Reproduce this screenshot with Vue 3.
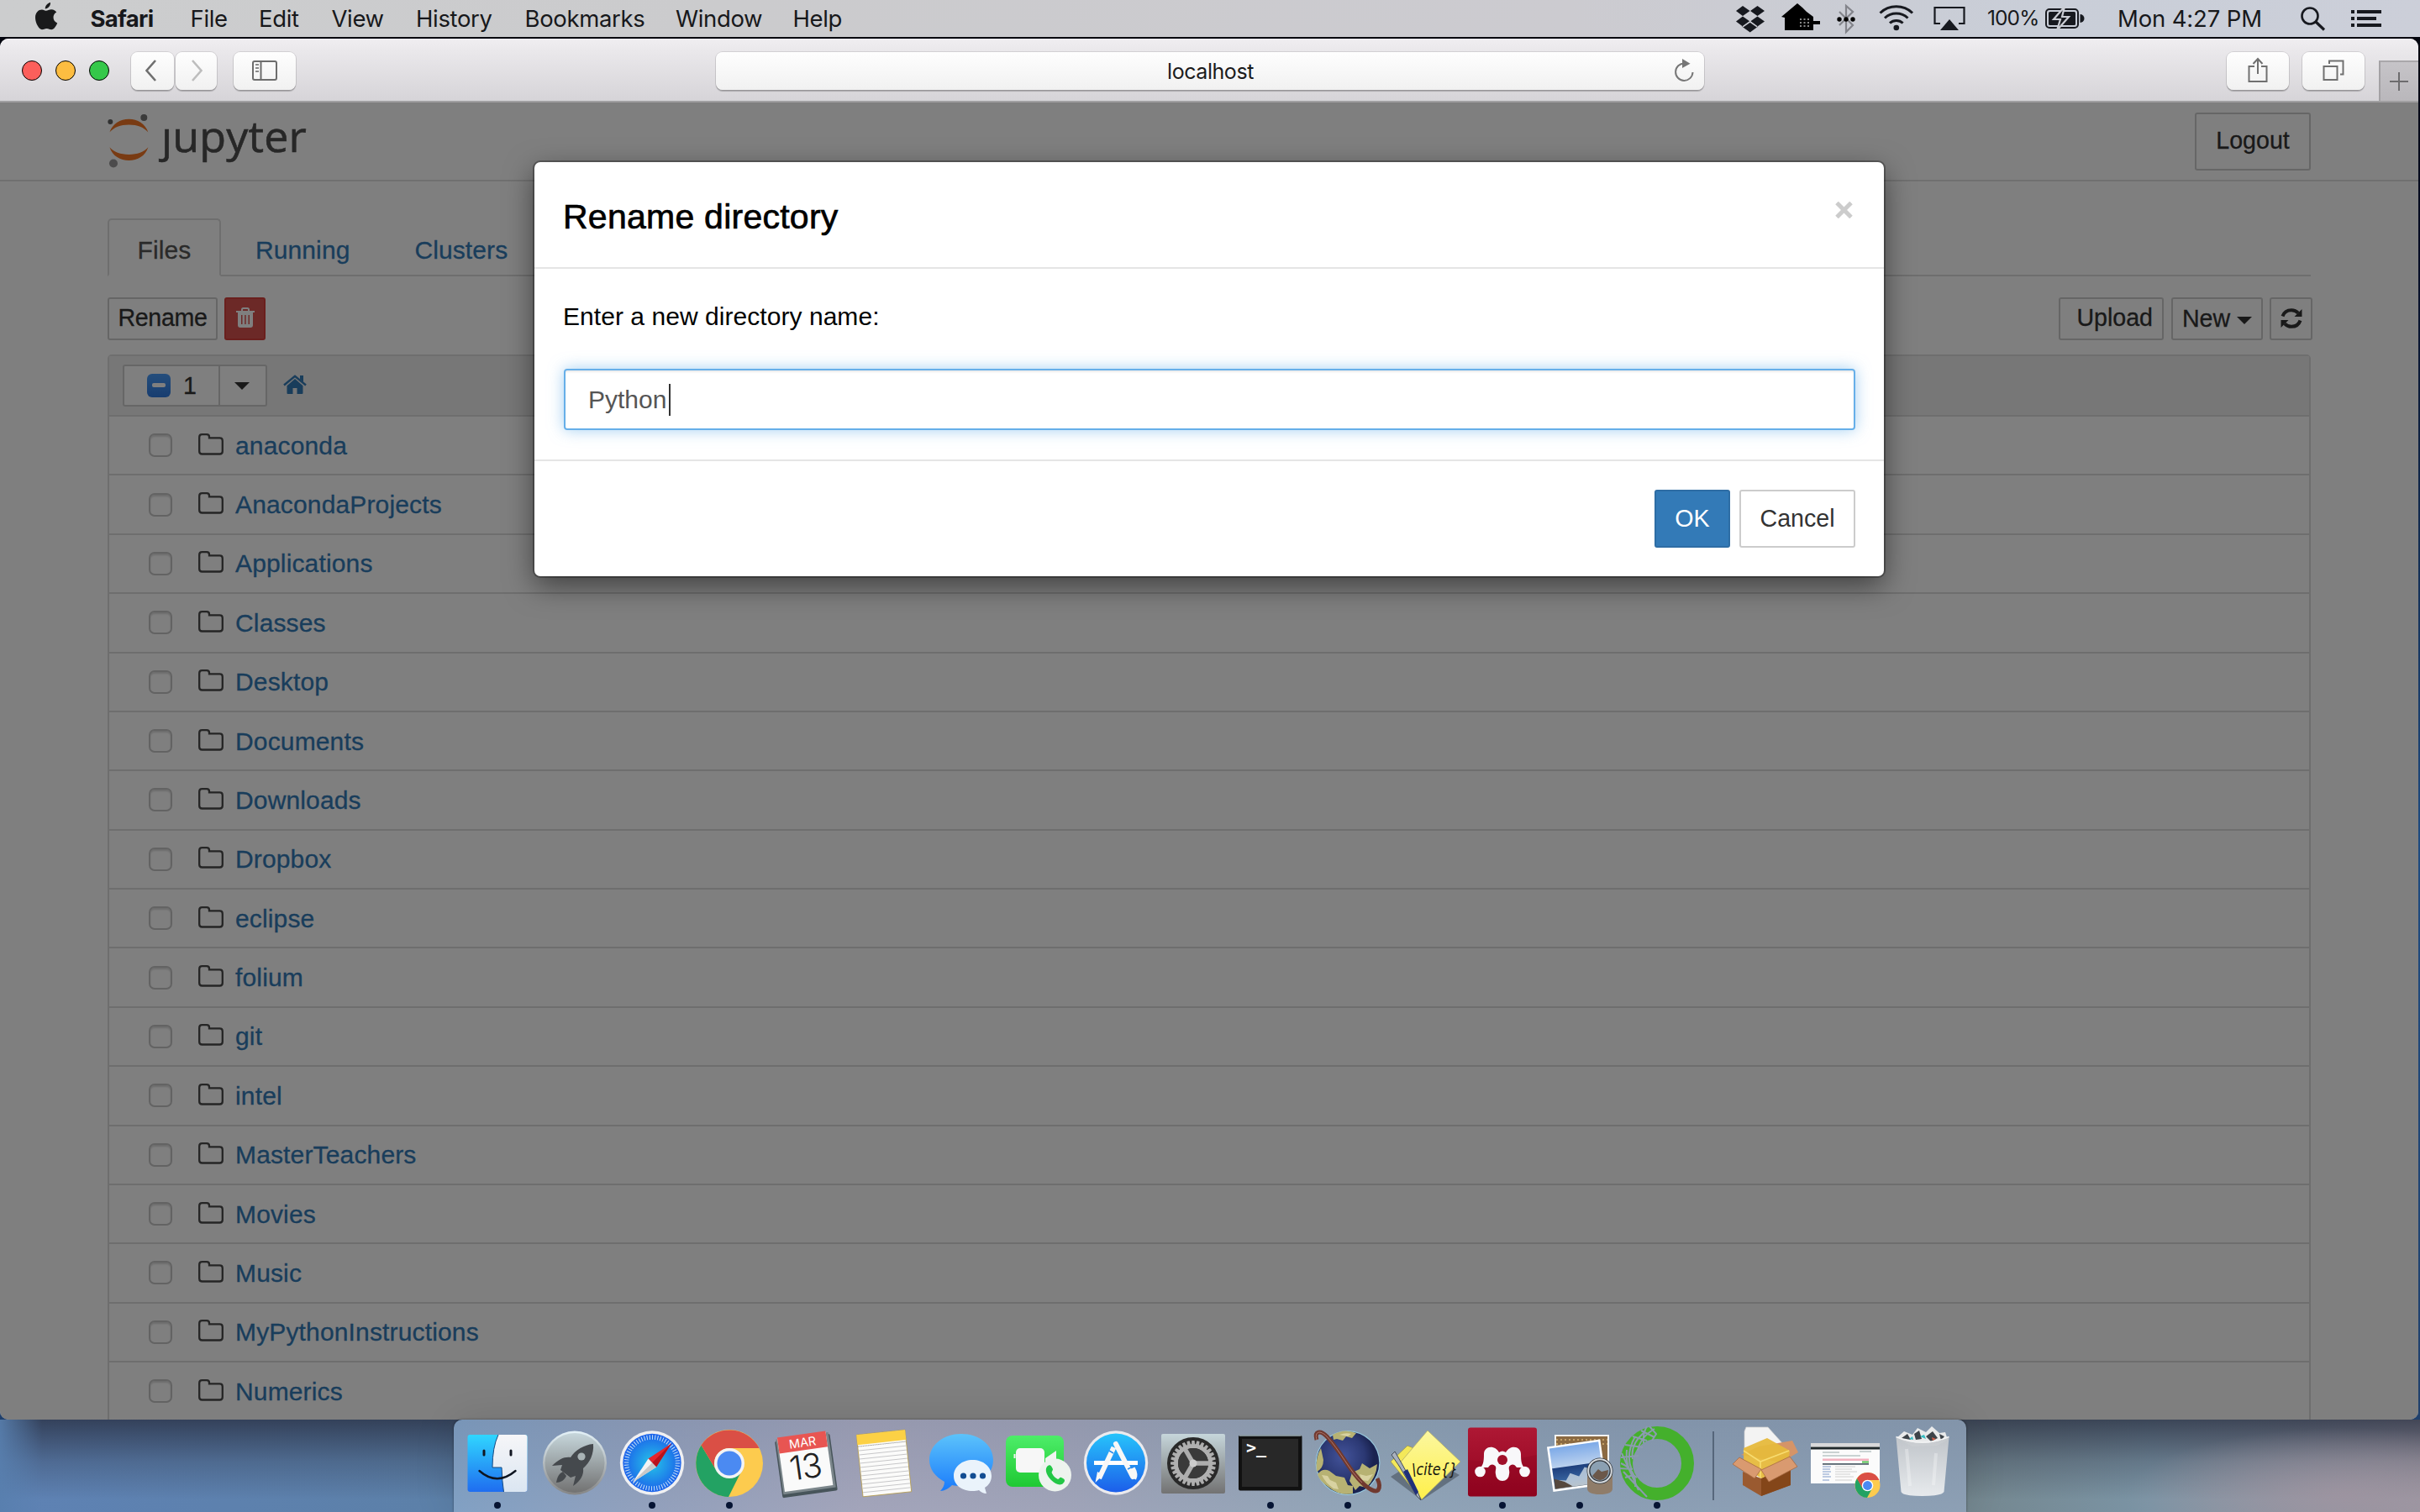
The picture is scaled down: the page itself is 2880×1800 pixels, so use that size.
<script setup>
const menus = [
  { label: 'Safari', w: 119, bold: true },
  { label: 'File', w: 81.5 },
  { label: 'Edit', w: 86.5 },
  { label: 'View', w: 100.5 },
  { label: 'History', w: 129.5 },
  { label: 'Bookmarks', w: 179.5 },
  { label: 'Window', w: 139.5 },
  { label: 'Help', w: 90 },
]

const folders = [
  'anaconda', 'AnacondaProjects', 'Applications', 'Classes', 'Desktop', 'Documents',
  'Downloads', 'Dropbox', 'eclipse', 'folium', 'git', 'intel', 'MasterTeachers',
  'Movies', 'Music', 'MyPythonInstructions', 'Numerics',
]

const noteLines = Array.from({ length: 11 }, (_, i) => 34 + i * 5)
const teeth = Array.from({ length: 28 }, (_, i) => (i * 360) / 28)
</script>

<template>
  <div class="desktop">
    <header class="menubar">
      <svg class="apple" width="28" height="34" viewBox="0 0 28 34">
        <path d="M19 0c.4 3.600-2.800 7.400-6.200 7.400C12.400 4 15.600.6 19 0z" />
        <path d="M14 9.800c1.600 0 3.400-1.600 6.200-1.600 2.600 0 4.800 1.400 6 3.400-5.400 3-4.600 10.800 1 12.800-1.200 3.200-4 7.800-7 7.800-2.200 0-3-1.300-5.600-1.300s-3.600 1.300-5.600 1.300C5.600 32.200 1 24.600 1 18 1 11.600 5 8.400 8.800 8.400c2.400 0 3.800 1.400 5.200 1.400z" />
      </svg>
      <nav class="menus">
        <span v-for="m in menus" :key="m.label" class="menu" :class="{ bold: m.bold }" :style="{ width: m.w + 'px' }">{{ m.label }}</span>
      </nav>
      <div class="status">
        <svg width="55" height="44" viewBox="2065 0 55 44"><g fill="#17191f"><path d="M2074 7l8.500 6-8.500 6-8-6zM2091.500 7l8.500 6-8.500 6-8.500-6z" /><path d="M2074 19.500l8.500 6-8.500 6-8-6zM2091.500 19.500l8.500 6-8.500 6-8.500-6z" /><path d="M2073 31.500l9.700-5 9.600 5-9.600 7z" /></g><path d="M2066 19.300l8.500-6 8.300 6-8.300 6zM2083 19.300l8.500-6 8.500 6-8.500 6z" fill="none" /><path d="M2074 31.800l8.700-6 8.500 6" stroke="#cbccd3" stroke-width="1.600" fill="none" /></svg>
        <svg width="66" height="44" viewBox="2120 0 66 44"><path d="M2120 20l19-16 6 5 5 5 8 6v5h8v4h-8v7h-34v-15z" fill="#000" /><path d="M2142 23h11M2142 27h11M2142 31h11" stroke="#888" stroke-width="2" stroke-dasharray="2 2.500" /></svg>
        <svg width="50" height="44" viewBox="2186 0 50 44"><path d="M2189 14l16 16-8 8V7l8 7-16 16" stroke="#83848b" stroke-width="2.200" fill="none" /><circle cx="2189" cy="23" r="2.700" /><circle cx="2197" cy="23" r="2.700" /><circle cx="2205" cy="23" r="2.700" /></svg>
        <svg width="65" height="44" viewBox="2236 0 65 44"><g fill="none" stroke="#17191f" stroke-width="3"><path d="M2237.500 15.500a28 28 0 0 1 38.500 0" /><path d="M2243 21.500a20 20 0 0 1 27.500 0" /><path d="M2249 27.500a11.500 11.500 0 0 1 15.600 0" /></g><circle cx="2256.800" cy="33" r="3.300" fill="#17191f" /></svg>
        <svg width="64" height="44" viewBox="2301 0 64 44"><path d="M2309 28h-6.500V9h35v19h-6.500" stroke="#17191f" stroke-width="2.200" fill="none" /><path d="M2309 36l11-13 11 13z" fill="#17191f" /></svg>
        <span class="pct">100%</span>
        <svg class="batt" width="87" height="44" viewBox="2434 0 87 44"><rect x="2435" y="11" width="38" height="22" rx="4" fill="none" stroke="#17191f" stroke-width="2" /><rect x="2438" y="14" width="32" height="16" rx="1.500" fill="#17191f" /><path d="M2475.500 17v10a5 5 0 0 0 0-10z" fill="#17191f" /><path d="M2457 8l-13 15h8l-4 13 14-16h-8z" fill="#17191f" stroke="#cbcdd4" stroke-width="2.200" /></svg>
        <span class="clock">Mon 4:27 PM</span>
        <svg width="60" height="44" viewBox="2738 0 60 44"><circle cx="2749" cy="19" r="9.500" fill="none" stroke="#17191f" stroke-width="2.600" /><path d="M2756 26l10 9.500" stroke="#17191f" stroke-width="3.200" /></svg>
        <svg width="40" height="44" viewBox="2798 0 40 44"><path d="M2798 14h4M2805 14h29M2798 22h4M2805 22h23M2798 30h4M2805 30h29" stroke="#17191f" stroke-width="4" /></svg>
      </div>
    </header>

    <main class="window">
      <div class="toolbar">
        <div class="lights"><i class="red"></i><i class="yellow"></i><i class="green"></i></div>
        <div class="btn back"><svg width="20" height="30" viewBox="0 0 20 30"><path d="M13 3L2.500 15 13 27" stroke="#6f6f6f" stroke-width="2.600" fill="none" /></svg></div>
        <div class="btn fwd"><svg width="20" height="30" viewBox="0 0 20 30"><path d="M5 3l10.500 12L5 27" stroke="#bdbdbd" stroke-width="2.600" fill="none" /></svg></div>
        <div class="btn side"><svg width="30" height="24" viewBox="0 0 30 24"><rect x="1" y="1" width="28" height="22" rx="2" fill="none" stroke="#6d6d6d" stroke-width="2" /><path d="M10.500 1v22" stroke="#6d6d6d" stroke-width="2" /><path d="M4 5h4M4 9h4M4 13h4" stroke="#8a8a8a" stroke-width="2" /></svg></div>
        <div class="url">
          <span>localhost</span>
          <svg class="reload" width="26" height="28" viewBox="0 0 26 28"><path d="M13.500 5.500A10.200 10.200 0 1 0 23.500 16" fill="none" stroke="#777" stroke-width="2" /><path d="M11 0l9.500 5.800L11 11z" fill="#777" /></svg>
        </div>
        <div class="btn share"><svg width="24" height="32" viewBox="0 0 24 32"><path d="M8 11H1.500v18h21V11H16M12 20V2M6.500 8L12 2l5.500 6" fill="none" stroke="#707070" stroke-width="2" /></svg></div>
        <div class="btn tabs"><svg width="26" height="26" viewBox="0 0 26 26"><path d="M1.500 8h16v16h-16zM8 5V1.500h16.500v16H21" fill="none" stroke="#707070" stroke-width="2" /></svg></div>
        <div class="newtab"><svg width="24" height="24" viewBox="0 0 24 24"><path d="M12 1v22M1 12h22" stroke="#6d6c6e" stroke-width="2" /></svg></div>
      </div>

      <div class="page">
        <div class="jhead">
          <div class="logo">
            <svg width="60" height="68" viewBox="126 134 60 68">
              <path d="M130.400 157.500C134 147 143 141.700 153.400 141.700s19.400 5.300 23 15.800c-5-5.800-13-9-23-9s-18 3.200-23 9zM130.400 175.300c5 5.800 13 8.600 23 8.600s18-2.800 23-8.600C172.800 186 163.800 191 153.400 191s-19.400-5-23-15.700z" fill="#f37726" />
              <circle cx="131.300" cy="145" r="3" fill="#616262" /><circle cx="171.300" cy="140" r="4" fill="#767677" /><circle cx="135" cy="194.500" r="5" fill="#989798" />
            </svg>
            <span class="word"><span class="jay">j</span>upyter</span>
          </div>
          <div class="logout">Logout</div>
        </div>
        <div class="tabbar">
          <div class="tab on">Files</div>
          <div class="tab">Running</div>
          <div class="tab">Clusters</div>
        </div>
        <div class="tools">
          <div class="jbtn rename">Rename</div>
          <div class="jbtn danger"><svg width="22" height="24" viewBox="0 0 22 24"><path d="M7 4V2.500Q7 1 8.500 1h5Q15 1 15 2.500V4" fill="none" stroke="#fff" stroke-width="2" /><path fill="#fff" fill-rule="evenodd" d="M0 4h22v2h-2v15q0 3-3 3H5q-3 0-3-3V6H0zM6 9v11h1.500V9zM10.200 9v11h1.500V9zM14.500 9v11H16V9z" /></svg></div>
          <div class="spacer"></div>
          <div class="jbtn upload">Upload</div>
          <div class="jbtn new">New<i class="caret"></i></div>
          <div class="jbtn refresh"><svg width="26" height="24" viewBox="0 0 26 24"><g fill="none" stroke="#333" stroke-width="4"><path d="M2.500 9.500C4 5 8 2.200 13 2.200c3.300 0 6 1.300 8 3.500" /><path d="M23.500 14.500c-1.500 4.500-5.500 7.300-10.500 7.300-3.300 0-6-1.300-8-3.500" /></g><path d="M25.500 1v9h-9zM.5 23v-9h9z" fill="#333" /></svg></div>
        </div>
        <div class="list">
          <div class="lhead">
            <div class="selgroup">
              <div class="sel"><span class="mixed"><i></i></span><span class="one">1</span></div>
              <div class="drop"><i class="caret"></i></div>
            </div>
            <svg class="home" width="28" height="24" viewBox="0 0 28 24"><path d="M14 5l9.500 8.300V22q0 1-1 1h-6v-7h-5v7h-6q-1 0-1-1v-8.700z" fill="#337ab7" /><path d="M1 12.500L14 1.800l13 10.700" fill="none" stroke="#337ab7" stroke-width="2.400" /><path d="M20 1h4v8l-4-3.500z" fill="#337ab7" /></svg>
          </div>
          <div v-for="f in folders" :key="f" class="row">
            <span class="chk"></span>
            <svg class="folder" width="30" height="26" viewBox="0 0 30 26"><path d="M1.200 4.500Q1.200 1.200 4.500 1.200H10q3 0 3 3v1.200h12.500q3.300 0 3.300 3.300v12.500q0 3.300-3.300 3.300h-21q-3.300 0-3.300-3.300z" fill="none" stroke="#4a4a4a" stroke-width="2.300" /></svg>
            <a>{{ f }}</a>
          </div>
        </div>
        <div class="backdrop">
          <section class="modal">
            <div class="mhead">
              <h4>Rename directory</h4>
              <svg class="close" width="21" height="20" viewBox="0 0 21 20"><path d="M2 1.500l17 17M19 1.500l-17 17" stroke="#ccc" stroke-width="5" /></svg>
            </div>
            <div class="mbody">
              <p>Enter a new directory name:</p>
              <div class="input">Python<i class="cursor"></i></div>
            </div>
            <div class="mfoot">
              <div class="mbtn ok">OK</div>
              <div class="mbtn cancel">Cancel</div>
            </div>
          </section>
        </div>
      </div>
    </main>

    <footer class="strip">
      <div class="dock">
        <svg class="defs" width="0" height="0"><defs>
          <linearGradient id="fb" x1="0" y1="0" x2="0" y2="1"><stop offset="0" stop-color="#30d6ff" /><stop offset="1" stop-color="#1f6df0" /></linearGradient>
          <linearGradient id="fw" x1="0" y1="0" x2="0" y2="1"><stop offset="0" stop-color="#f6f6f8" /><stop offset="1" stop-color="#dbe6f2" /></linearGradient>
          <linearGradient id="metal" x1="0" y1="0" x2="0" y2="1"><stop offset="0" stop-color="#c6d6db" /><stop offset="1" stop-color="#727272" /></linearGradient>
          <linearGradient id="rim" x1="0" y1="0" x2="0" y2="1"><stop offset="0" stop-color="#e4f2f8" /><stop offset="1" stop-color="#858585" /></linearGradient>
          <radialGradient id="saf"><stop offset="0" stop-color="#25c5e8" /><stop offset="1" stop-color="#1c62ea" /></radialGradient>
          <linearGradient id="msg" x1="0" y1="0" x2="0" y2="1"><stop offset="0" stop-color="#5cc3fb" /><stop offset="1" stop-color="#1a7bfb" /></linearGradient>
          <linearGradient id="ft" x1="0" y1="0" x2="0" y2="1"><stop offset="0" stop-color="#4ded69" /><stop offset="1" stop-color="#1fc933" /></linearGradient>
          <linearGradient id="as" x1="0" y1="0" x2="0" y2="1"><stop offset="0" stop-color="#27c4fb" /><stop offset="1" stop-color="#1c5eea" /></linearGradient>
          <radialGradient id="earth" cx=".42" cy=".4"><stop offset="0" stop-color="#43539a" /><stop offset=".7" stop-color="#2b3873" /><stop offset="1" stop-color="#1a2350" /></radialGradient>
          <linearGradient id="mend" x1="0" y1="0" x2="0" y2="1"><stop offset="0" stop-color="#ae1834" /><stop offset="1" stop-color="#93031f" /></linearGradient>
          <linearGradient id="sea" x1="0" y1="0" x2="0" y2="1"><stop offset="0" stop-color="#7daae8" /><stop offset=".48" stop-color="#b9d0ee" /><stop offset=".5" stop-color="#1e3f7d" /><stop offset=".8" stop-color="#35609c" /><stop offset="1" stop-color="#5a6674" /></linearGradient>
          <linearGradient id="trash" x1="0" y1="0" x2="0" y2="1"><stop offset="0" stop-color="#c3c7cb" /><stop offset="1" stop-color="#eceef0" /></linearGradient>
          <linearGradient id="yel" x1="0" y1="0" x2="0" y2="1"><stop offset="0" stop-color="#fbf7a0" /><stop offset="1" stop-color="#fff04a" /></linearGradient>
        </defs></svg>

        <!-- Finder -->
        <svg class="app" viewBox="0 0 92 110"><rect x="10.500" y="18" width="71" height="68" rx="3" fill="url(#fb)" /><path d="M47 18h31.500q3 0 3 3v62q0 3-3 3H53.500Q52 76 51 57H40q0-24 7-39z" fill="url(#fw)" /><path d="M47 18q-7 15-7 39h11q.5 17 2.500 29" fill="none" stroke="#174a80" stroke-width="1" /><path d="M30 37v5M62 37v5" stroke="#121722" stroke-width="3" stroke-linecap="round" /><path d="M24.500 61q21 18.500 43 0" fill="none" stroke="#0d1420" stroke-width="2.400" stroke-linecap="round" /><circle cx="46" cy="102" r="4" fill="#061433" /></svg>
        <!-- Launchpad -->
        <svg class="app" viewBox="0 0 92 110"><circle cx="46" cy="51.500" r="38" fill="url(#rim)" /><circle cx="46" cy="51.500" r="35.500" fill="url(#metal)" /><path d="M68 29c-11 1-21 7-27 16-7-1-14 2-22 10l12-1-2 6 12 9 6-2-3 12c9-6 13-13 12-21 8-7 13-17 12-29z" fill="#45494d" /><circle cx="54" cy="44" r="4.600" fill="#a9b3b5" /><path d="M32 62c-5 2-7 7-8 13 5 0 10-3 12-8z" fill="#45494d" /></svg>
        <!-- Safari -->
        <svg class="app" viewBox="0 0 92 110"><circle cx="46" cy="51.500" r="38.200" fill="#f0f0f2" /><circle cx="46" cy="51.500" r="34.700" fill="url(#saf)" /><circle cx="46" cy="51.500" r="30.500" fill="none" stroke="#e3f2fb" stroke-width="5.500" stroke-dasharray="1 2.190" opacity=".85" /><path d="M69 28.500L51 56.500 41.500 46.500z" fill="#e5252c" /><path d="M69 28.500L51 56.500 46 51.500z" fill="#b8121c" /><path d="M23 74.500l18.500-28 9.500 10z" fill="#f3f3f3" /><path d="M23 74.500L46 51.500l5 5z" fill="#c8c8c8" /><circle cx="46" cy="102" r="4" fill="#061433" /></svg>
        <!-- Chrome -->
        <svg class="app" viewBox="0 0 92 110"><circle cx="46" cy="52" r="40" fill="#fdcb4e" /><path d="M12.500 30.500A40 40 0 0 0 45 92L60 62 46 52 29 58z" fill="#23a263" /><path d="M12.500 30.500A40 40 0 0 1 81.500 34H46a18 18 0 0 0-17 24z" fill="#da4f45" /><circle cx="46" cy="52" r="18" fill="#f4f4f4" /><circle cx="46" cy="52" r="14.500" fill="#4b8af2" /><circle cx="46" cy="102" r="4" fill="#061433" /></svg>
        <!-- Calendar -->
        <svg class="app" viewBox="0 0 92 110"><g transform="rotate(-8 46 52)"><rect x="12" y="21" width="66" height="68" rx="2" fill="#47545a" /><rect x="13.500" y="19" width="63" height="66" fill="#7b868b" /><rect x="15.500" y="18" width="58" height="64" fill="#fafafa" /><rect x="15.500" y="17" width="58" height="19" fill="#e85552" /><text x="44.500" y="32" text-anchor="middle" font-size="14.500" fill="#fff" font-family="Inter, sans-serif">MAR</text><text x="44" y="70" text-anchor="middle" font-size="40" font-weight="300" letter-spacing="-1" fill="#222" font-family="Inter, sans-serif">13</text></g></svg>
        <!-- Notes -->
        <svg class="app" viewBox="0 0 92 110"><g transform="rotate(-6 46 52)"><rect x="17" y="15" width="58" height="74" fill="#fbfbfa" stroke="#b59b48" stroke-width=".8" /><rect x="17" y="15" width="58" height="12" fill="#fcd145" /><path d="M17 29h58" stroke="#777" stroke-width="1" stroke-dasharray="1 1" /><path v-for="y in noteLines" :key="y" :d="`M17.500 ${y}h57`" stroke="#c4c4c6" stroke-width=".9" /></g></svg>
        <!-- Messages -->
        <svg class="app" viewBox="0 0 92 110"><path d="M46 17c21 0 38 13 38 31S67 79 46 79c-4 0-8-.4-11-1-4 4-9 7-14 7 3-3 5-7 5-11C15 68 8 59 8 48c0-18 17-31 38-31z" fill="url(#msg)" /><path d="M59.500 48C72 48 82 56 82 67c0 6-3 11-8 14l2 7c-4 0-7-2-9-4-2 .6-5 1-7.500 1C47 85 37 78 37 67s10-19 22.500-19z" fill="#eaf3fb" /><circle cx="48.500" cy="67" r="3.600" fill="#134d92" /><circle cx="60" cy="67" r="3.600" fill="#134d92" /><circle cx="71.500" cy="67" r="3.600" fill="#134d92" /></svg>
        <!-- FaceTime -->
        <svg class="app" viewBox="0 0 92 110"><rect x="7" y="19" width="69" height="61" rx="8" fill="url(#ft)" /><rect x="19" y="34" width="34" height="29" rx="5" fill="#f7f7f7" /><path d="M54 46l13-9v22L54 52zM16.500 41h2v5h-2z" fill="#f0f4f0" /><circle cx="65.500" cy="66" r="19.500" fill="#edf3ee" /><path d="M56 56c3-3 5-2 7 3 0 2-2 3-1 5 2 4 5 6 7 7 2 0 2-3 4-2 5 2 5 4 2 7-3 3-9 1-14-4s-8-12-5-16z" fill="#23c746" /></svg>
        <!-- App Store -->
        <svg class="app" viewBox="0 0 92 110"><circle cx="46" cy="51.500" r="38.200" fill="#ecebee" /><circle cx="46" cy="51.500" r="35" fill="url(#as)" /><path d="M20 51.500h52" stroke="#fff" stroke-width="5" /><path d="M43.500 33L26 70" stroke="#f7f7f7" stroke-width="6" /><path d="M24 62l-2.500 13 9-9z" fill="#f7f7f7" /><path d="M46 29l20 39" stroke="#f7f7f7" stroke-width="6" stroke-linecap="round" /><path d="M61 60l7.500-3.500q5 9 1.500 15-8-2-9-11.500z" fill="#f7f7f7" /><path d="M38 37l5 3M60 59l7-3.500" stroke="#2b8cec" stroke-width="1.500" /></svg>
        <!-- System Preferences -->
        <svg class="app" viewBox="0 0 92 110"><rect x="8" y="17" width="76" height="71" rx="2" fill="url(#metal)" /><circle cx="46" cy="52" r="31" fill="#292929" /><path v-for="t in teeth" :key="t" d="M44.400 25h3.200l.7 6h-4.600z" fill="#adadad" :transform="`rotate(${t} 46 52)`" /><circle cx="46" cy="52" r="20.500" fill="none" stroke="#b0b0b0" stroke-width="5" /><circle cx="46" cy="52" r="18" fill="#3a3a3a" /><path d="M46 52h19M46 52L36.500 35.500M46 52l-9.500 16.500" stroke="#adadad" stroke-width="5.500" /><circle cx="46" cy="52" r="4.500" fill="#ccc" /></svg>
        <!-- Terminal -->
        <svg class="app" viewBox="0 0 92 110"><rect x="8" y="18.500" width="75.500" height="66" rx="2" fill="#111" /><path d="M9 19h73.500" stroke="#9fb0b8" stroke-width="1.500" /><rect x="12" y="23" width="67" height="57" fill="#282828" /><text x="17" y="40" font-size="20" font-weight="700" fill="#fff" font-family="DejaVu Sans Mono, monospace">&gt;_</text><circle cx="46" cy="102" r="4" fill="#061433" /></svg>
        <!-- Earth browser -->
        <svg class="app" viewBox="0 0 92 110"><circle cx="46" cy="51.500" r="38.500" fill="#9bdcf2" opacity=".7" /><circle cx="46" cy="51.500" r="37.300" fill="url(#earth)" /><path d="M28 18q14-8 28-2l-5 6-7-2-4 5-7-2-4 1zM14 34q-7 12-5 28 8-4 8-14zM10 65q6-8 14-4l8 6 10 2 4 9 6 1v9q-16 3-28-7-12-8-14-16zM48 73l3-10 9-4 3-7 9 6 9-5q-1 16-13 28l-8-2-5 5z" fill="#b7b273" /><path d="M15 66l7 1 3 5 7 3 3 8-6-1q-10-7-14-16zM60 65l8 2 8-2-6 8-8-1zM36 18q8-3 14-1l-4 3z" fill="#e0d9ac" opacity=".8" /><path d="M9 24C6 14 13 12 21 20c16 17 27 41 42 55 8 8 16 12 19 9 3-4 2-8-1-14" fill="none" stroke="#70392f" stroke-width="5" /><path d="M9 24C6 14 13 12 21 20c16 17 27 41 42 55" fill="none" stroke="#b0766a" stroke-width="1" /><circle cx="46" cy="102" r="4" fill="#061433" /></svg>
        <!-- BibDesk -->
        <svg class="app" viewBox="0 0 92 110"><path d="M5 68q40-28 82-2L42 96z" fill="#39414b" opacity=".5" /><path d="M5 50l20-19 25 10-10 52z" fill="#f3e859" stroke="#9a9550" stroke-width=".8" /><path d="M49 13l39 37-46 45L14 54z" fill="url(#yel)" stroke="#b3ad68" stroke-width=".8" /><text x="30" y="66" font-size="20" font-style="italic" fill="#16160f" font-family="DejaVu Sans, sans-serif" textLength="55" lengthAdjust="spacingAndGlyphs">\cite{}</text><path d="M6 42l4-4 8 14 20 36 3 8-5-5-21-36z" fill="#a9b1bd" stroke="#444d5a" stroke-width="1" /><path d="M20 62l5-3 13 27-3 4z" fill="#20307a" /></svg>
        <!-- Mendeley -->
        <svg class="app" viewBox="0 0 92 110"><rect x="5" y="9.500" width="82" height="82" rx="3" fill="url(#mend)" /><path d="M5 48q40 4 82-6v46q0 3-3 3H8q-3 0-3-3z" fill="#7d0018" opacity=".2" /><path d="M24 41c0-9 12-12 18-2q4-3 8 0c6-10 18-7 18 2 0 9 1 13 4 16h-9c-3-5-7-4-9-1-1 3 1 5 0 9a8 8 0 0 1-16 0c-1-4 1-6 0-9-2-3-6-4-9 1h-9c3-3 4-7 4-16z" fill="#f8f8fa" /><circle cx="46" cy="48" r="6" fill="#a0102a" /><circle cx="19.500" cy="62" r="6.300" fill="#f8f8fa" /><circle cx="72.500" cy="62" r="6.300" fill="#f8f8fa" /><circle cx="46" cy="62" r="6.300" fill="#f8f8fa" /><circle cx="46" cy="102" r="4" fill="#061433" /></svg>
        <!-- Preview -->
        <svg class="app" viewBox="0 0 92 110"><rect x="16" y="18" width="65" height="62" fill="#f3f3f1" /><rect x="18" y="20" width="61" height="58" fill="#8b6a42" /><path d="M18 24h61M18 29h61" stroke="#c5a267" stroke-width="2" stroke-dasharray="2 3" /><g transform="rotate(-8 40 52)"><rect x="10" y="28" width="64" height="54" fill="#fff" /><rect x="12.500" y="30.500" width="59" height="49" fill="url(#sea)" /><path d="M13 79l4-10 10 2 6-8 10 5 8-10 8 4 6-6 6 4v16l-16 3z" fill="#d8e3ea" opacity=".75" /><path d="M13 79v-12l12 5 9 7z" fill="#56483d" /></g><path d="M55 60v22q0 7 15 7t15-7V60z" fill="#8f7c69" /><circle cx="70" cy="61" r="15.500" fill="#2f3338" /><circle cx="70" cy="61" r="13.800" fill="none" stroke="#d7dce0" stroke-width="2" /><circle cx="70" cy="61" r="11.500" fill="#8ba0b2" /><path d="M61 67l7-8 4 3 8-2q0 10-9 12-7 0-10-5z" fill="#6b584a" /><circle cx="46" cy="102" r="4" fill="#061433" /></svg>
        <!-- Anaconda -->
        <svg class="app" viewBox="0 0 92 110"><circle cx="46" cy="52" r="36.500" fill="none" stroke="#44b02c" stroke-width="15" /><g stroke="#8c9bb0" stroke-width="2" fill="none"><path d="M24 84L4 40M34 92L6 62M20 80q2-20-17-28M22 69Q8 60 10 36M16 60Q8 42 20 20M17 47q-3-18 14-32M3 45l21-2M8 30l21 3M17 20l17 5M27 13l16 8M23 37q3-16 20-26M30 28q-1-12 4-20M8 69l10-3M1 58l16 1M37 8l8 9-5 8" /></g><circle cx="46" cy="102" r="4" fill="#061433" /></svg>

        <i class="sep"></i>

        <!-- Package stack -->
        <svg class="app" viewBox="0 0 92 110"><path d="M22 9h26l18 20v50H20V14z" fill="#f3f3f3" stroke="#ccc" stroke-width=".7" /><path d="M16 42l21-10 40-7 7 14-20 12z" fill="#d59468" /><path d="M18 62l22 8 35-16v24L40 91 18 78z" fill="#9a5a30" /><path d="M40 70v21l35-13V54z" fill="#844619" /><path d="M19 34l28-12 27 15-2 18-32 15-21-14z" fill="#e6b93c" opacity=".95" /><path d="M19 37l20 13 34-13M39 50v19" stroke="#f8dc70" stroke-width="1.600" fill="none" /><path d="M14 45L6 53l26 17 8-11zM40 60l9 14 34-18-9-12z" fill="#d99a70" stroke="#a76a43" stroke-width=".8" /></svg>
        <!-- Minimised window -->
        <svg class="app wide" viewBox="0 0 92 110"><rect x="5" y="28" width="82" height="48" fill="#fbfbfb" /><rect x="5" y="28" width="82" height="4" fill="#d8d8da" /><rect x="5" y="32.500" width="82" height="3" fill="#20282b" /><path d="M19 39h20M63 38h14M19 43h45" stroke="#9aa" stroke-width="1" /><rect x="19" y="46.500" width="55" height="2.500" fill="#f3b2bf" /><rect x="66" y="49.500" width="8" height="2" fill="#53bd4f" /><rect x="19" y="52" width="55" height="1.800" fill="#56646e" /><path d="M19 56h10M19 59h9M19 62h10M19 65h8M19 68h10M19 72h8" stroke="#7f9ac9" stroke-width="1" /><path d="M34 56h24M34 59h20M34 62h26M34 65h18M34 68h22M34 72h20" stroke="#c6c6c6" stroke-width=".8" /><circle cx="72.500" cy="78" r="15" fill="#fdcb4e" /><path d="M60 70A15 15 0 0 0 72 93l6-11-12-2z" fill="#23a263" /><path d="M60 70a15 15 0 0 1 26.500 2H72q-6 1-6 9z" fill="#da4f45" /><circle cx="72.500" cy="78.500" r="6.800" fill="#fff" /><circle cx="72.500" cy="78.500" r="5.400" fill="#4b8af2" /></svg>
        <!-- Trash -->
        <svg class="app" viewBox="0 0 92 110"><path d="M15 22l9-8 10 4 6-8 10 5 7-7 9 8 7-1 3 9-13 7-29 1z" fill="#e9eaeb" /><path d="M21 22l7-5 4 7zM36 17l6-4 3 10-7 1zM50 20l8-6 6 8-8 4zM66 17l6 3-4 5z" fill="#3d4349" /><path d="M43 20l5-2 2 5zM30 23l4-3 1 4z" fill="#33bcc2" /><path d="M57 21l5 2-4 2z" fill="#cb5a45" /><path d="M14.500 21q31 14 63 0l-6 65q-3 5-26 5t-25-5z" fill="url(#trash)" opacity=".95" /><path d="M14.500 20.500q31 13 63 0" fill="none" stroke="#f2f3f4" stroke-width="1.500" /><path d="M27 35l4 44M62 40l-3 38" stroke="#fff" stroke-width="4" opacity=".3" /></svg>
      </div>
    </footer>
  </div>
</template>

<style>
body { margin: 0; background: #04060f; }
</style>

<style scoped>
* { box-sizing: border-box; }
i { display: block; font-style: normal; }
svg { display: block; flex: none; }
.desktop { position: relative; width: 2880px; height: 1800px; overflow: hidden; display: flex; flex-direction: column; font-family: "Liberation Sans", Arial, sans-serif; background: linear-gradient(180deg, #02030a 0, #060c24 300px, #10284c 600px, #1d4a80 1000px, #20406c 1690px); }

.menubar { height: 44px; flex: none; display: flex; align-items: center; background: linear-gradient(90deg, #cccdce 0, #cbcbcd 30%, #cccbd0 65%, #c9ced8 85%, #cccfd9 100%); color: #17181b; font-family: Inter, sans-serif; font-size: 27.500px; line-height: 44px; }
.apple { margin: -4px 0 0 41px; fill: #191a1b; }
.menus { display: flex; margin-left: 38.500px; }
.menu { letter-spacing: -.35px; white-space: nowrap; }
.bold { font-weight: 700; letter-spacing: -.7px; }
.status { display: flex; margin-left: auto; width: 815px; white-space: nowrap; }
.pct { width: 69px; font-size: 24.500px; letter-spacing: -.9px; line-height: 43px; }
.clock { width: 217px; margin-left: -1px; margin-right: 1px; letter-spacing: -.15px; }

.window { width: 2878px; height: 1644px; margin-top: 2px; flex: none; border-radius: 10px; overflow: hidden; display: flex; flex-direction: column; background: #fff; }
.toolbar { height: 76px; flex: none; display: flex; align-items: flex-start; background: linear-gradient(180deg, #f0eef1 0, #ebe9ec 15%, #d6d4d8 100%); border-bottom: 2px solid #a09fa1; }
.lights { display: flex; gap: 16px; margin: 26px 0 0 26px; }
.lights i { width: 24px; height: 24px; border-radius: 50%; border: 1px solid; }
.red { background: #fc5f5b; border-color: #dd4744; }
.yellow { background: #fdbd41; border-color: #dd9f35; }
.green { background: #35c84a; border-color: #28a935; }
.btn { height: 45px; margin-top: 15.500px; border-radius: 8px; background: linear-gradient(180deg, #fefefe, #f1f1f1); box-shadow: 0 0 0 1px rgba(0,0,0,.1), 0 1.500px 1px rgba(0,0,0,.22); display: flex; align-items: center; justify-content: center; }
.back { width: 51px; margin-left: 26px; }
.fwd { width: 49px; margin-left: 2px; }
.side { width: 74px; margin-left: 20px; }
.url { width: 1176px; height: 45px; margin: 15.500px 0 0 500px; border-radius: 8px; background: linear-gradient(180deg, #fefefe, #f1f1f1); box-shadow: 0 0 0 1px rgba(0,0,0,.1), 0 1.500px 1px rgba(0,0,0,.22); display: flex; align-items: center; justify-content: center; position: relative; font-family: Inter, sans-serif; font-size: 25px; letter-spacing: -.45px; color: #1c1c1c; padding: 1px 0 0 1px; }
.reload { position: absolute; right: 11px; top: 8px; }
.share { width: 74px; margin-left: 622px; padding-bottom: 1px; }
.tabs { width: 74px; margin-left: 16px; padding-bottom: 1px; }
.newtab { width: 47px; height: 48px; margin: 26px 0 0 auto; background: linear-gradient(180deg, #c6c4c8, #b9b7bb); border-left: 2px solid #a3a1a4; border-top: 2px solid #a9a7aa; display: flex; align-items: center; justify-content: center; padding-right: 2px; }

.page { position: relative; flex: 1; min-height: 0; overflow: hidden; color: #000; }
.jhead { height: 94px; border-bottom: 2px solid #e0e0e0; display: flex; justify-content: space-between; padding: 12px 128px 0 126px; }
.logo { display: flex; }
.word { margin: -9px 0 0 6px; font-family: "Open Sans", "Noto Sans", sans-serif; font-size: 52px; line-height: 72px; color: #4e4e4e; letter-spacing: .15px; -webkit-text-stroke: .6px #4e4e4e; }
.jay { display: inline-block; clip-path: inset(27px -10px 0 -14px); }
.logout { width: 138px; height: 69px; border: 2px solid #ccc; border-radius: 3px; font-size: 28.600px; line-height: 62px; text-align: center; color: #333; -webkit-text-stroke: .3px #333; }
.tabbar { display: flex; margin: 44px 128px 0 128px; height: 69px; border-bottom: 2px solid #ddd; }
.tab { height: 69px; padding: 0 34px 0 39px; font-size: 30px; line-height: 72px; color: #337ab7; letter-spacing: .1px; border: 2px solid transparent; -webkit-text-stroke: .3px; }
.tab.on { width: 135px; padding: 0; text-align: center; color: #555; border-color: #ddd; border-bottom-color: #fff; border-radius: 5px 5px 0 0; }
.tools { display: flex; margin: 25px 126px 0 128px; height: 51px; }
.jbtn { height: 51px; border: 2px solid #ccc; border-radius: 3px; font-size: 28.600px; line-height: 45px; color: #333; white-space: nowrap; display: flex; justify-content: center; -webkit-text-stroke: .3px #333; }
.rename { width: 131px; letter-spacing: -.35px; }
.danger { width: 49px; margin-left: 8px; background: #d9534f; border-color: #d43f3a; align-items: center; padding-top: 1px; }
.danger svg { margin-top: -4px; }
.spacer { flex: 1; }
.upload { width: 125px; justify-content: flex-end; padding-right: 11px; margin-right: 9px; }
.new { width: 109px; margin-right: 8px; align-items: center; }
.caret { width: 0; height: 0; border: 9px solid transparent; border-top-color: #333; border-bottom: 0; }
.new .caret { margin: 3px 0 0 8px; }
.refresh { width: 51px; align-items: center; padding-bottom: 1px; }
.list { margin: 17px 128px 0 128px; border: 2px solid #ddd; border-radius: 5px 5px 0 0; }
.lhead { height: 72px; background: #eee; border-bottom: 2px solid #ddd; display: flex; align-items: center; padding: 0 0 1px 16px; }
.selgroup { display: flex; width: 172px; height: 50px; border: 2px solid #ccc; border-radius: 3px; background: #fff; }
.sel { width: 112px; display: flex; align-items: center; padding-left: 27px; }
.mixed { width: 28px; height: 28px; border-radius: 6px; background: linear-gradient(180deg, #4a9cf8, #2f7ae0); display: flex; align-items: center; justify-content: center; }
.mixed i { width: 16px; height: 5px; border-radius: 2px; background: #fff; }
.one { font-size: 28.600px; color: #333; margin-left: 15px; line-height: 44px; -webkit-text-stroke: .3px #333; }
.drop { flex: 1; border-left: 2px solid #ccc; display: flex; align-items: center; justify-content: center; padding: 2px 2px 0 0; }
.home { margin-left: 19px; margin-top: -2px; }
.row { height: 70.375px; border-bottom: 2px solid #ddd; display: flex; align-items: center; padding-left: 47px; font-size: 30px; color: #337ab7; -webkit-text-stroke: .3px #337ab7; }
.chk { width: 28px; height: 28px; border-radius: 7px; border: 2px solid #c6c6c6; box-shadow: inset 0 2px 2px rgba(0,0,0,.15); }
.folder { margin: -3px 14px 0 31px; }
.row a { letter-spacing: .15px; padding-top: 1px; }

.backdrop { position: absolute; inset: 0; background: rgba(0,0,0,.5); display: flex; justify-content: center; align-items: flex-start; padding-top: 71px; }
.modal { width: 1606px; height: 493px; background: #fff; border-radius: 7px; box-shadow: 0 0 0 2px rgba(0,0,0,.28), 0 11px 34px rgba(0,0,0,.5); display: flex; flex-direction: column; }
.mhead { height: 127px; border-bottom: 2px solid #e5e5e5; display: flex; justify-content: space-between; align-items: flex-start; padding: 0 37px 0 34px; }
h4 { margin: 37px 0 0; font-size: 41px; line-height: 56px; font-weight: 400; letter-spacing: .25px; -webkit-text-stroke: .7px #000; }
.close { margin-top: 47px; }
.mbody { height: 229px; padding: 0 34px 0 34px; border-bottom: 2px solid #e5e5e5; }
p { margin: 37px 0 42px; font-size: 30px; line-height: 40px; letter-spacing: .05px; }
.input { height: 73px; border: 2px solid #66afe9; border-radius: 4px; margin-left: 1px; font-size: 30px; line-height: 69px; color: #555; padding-left: 27px; display: flex; align-items: center; box-shadow: inset 0 2px 2px rgba(0,0,0,.075), 0 0 18px rgba(102,175,233,.6); }
.cursor { width: 2px; height: 38px; background: #333; margin-left: 3px; }
.mfoot { display: flex; justify-content: flex-end; padding: 34px 34px 0 0; }
.mbtn { height: 69px; border: 2px solid #ccc; border-radius: 3px; font-size: 28.600px; line-height: 64px; text-align: center; color: #333; }
.ok { width: 90px; background: #337ab7; border-color: #2e6da4; color: #fff; margin-right: 11px; }
.cancel { width: 138px; }

.strip { height: 110px; flex: none; background:
  linear-gradient(90deg, rgba(88,127,174,.9) 0, rgba(88,127,174,0) 50px),
  radial-gradient(ellipse 260px 80px at 2790px 90px, rgba(160,148,160,.8), rgba(160,148,160,0)),
  linear-gradient(180deg, rgba(38,44,62,.75) 0, rgba(38,44,62,.27) 50px, rgba(38,44,62,0) 95px),
  linear-gradient(90deg, #5e82b4 0, #5c80a8 540px, #74878f 2340px, #7b94a5 2560px, #9a97a2 2880px); display: flex; justify-content: center; }
.dock { width: 1800px; height: 110px; padding-left: 6px; display: flex; border-radius: 10px 10px 0 0; box-shadow: 0 0 3px rgba(0,0,0,.4), 0 0 50px rgba(0,0,0,.12); background: linear-gradient(180deg, rgba(110,116,135,.15), rgba(255,255,255,.06)), linear-gradient(90deg, #7a9bc0 0, #8d9bb8 14%, #9d9fb6 27%, #9a9eb4 40%, #8a9fb3 60%, #8599b0 78%, #869ab0 100%); }
.defs { position: absolute; }
.app { width: 92px; height: 110px; overflow: visible; }
.wide { margin-left: 2px; }
.sep { width: 2px; height: 82px; margin: 14px 16px 0 20px; background: rgba(70,85,105,.75); }
</style>
